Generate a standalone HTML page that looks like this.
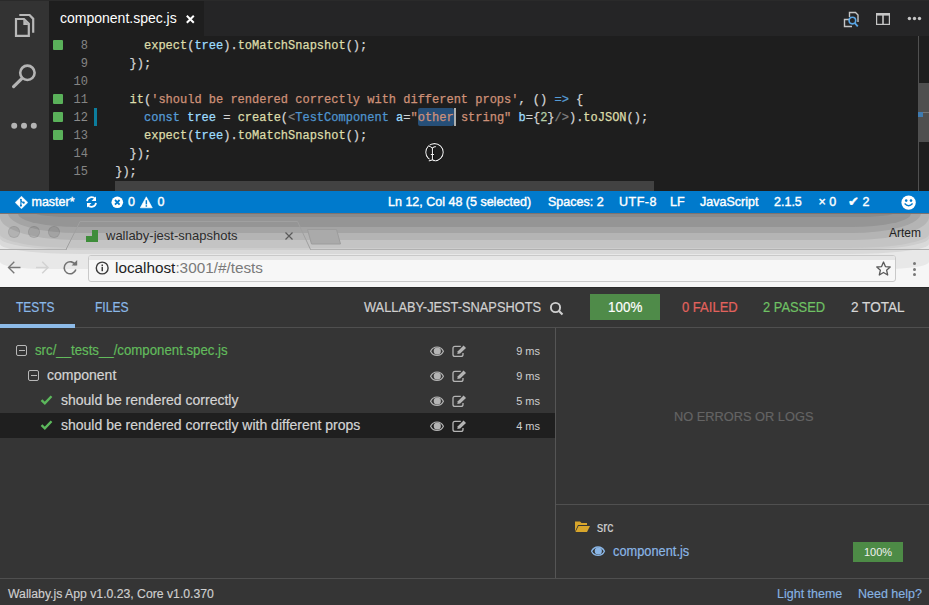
<!DOCTYPE html>
<html><head><meta charset="utf-8">
<style>
*{margin:0;padding:0;box-sizing:border-box}
html,body{width:929px;height:605px;overflow:hidden;background:#1e1e1e;font-family:"Liberation Sans",sans-serif}
.abs{position:absolute}
#vs{position:absolute;left:0;top:0;width:929px;height:191px;background:#1e1e1e}
#topline{left:0;top:0;width:929px;height:1px;background:#2a2a2a}
#act{left:0;top:0;width:49px;height:191px;background:#333333}
#tabs{left:49px;top:0;width:880px;height:36px;background:#252526}
#tab{left:49px;top:0;width:155px;height:36px;background:#1e1e1e}
.tabtxt{left:60px;top:10.75px;font-size:14px;line-height:14px;color:#ffffff;white-space:nowrap}
.code{font-family:"Liberation Mono",monospace;font-size:12px;-webkit-text-stroke:0.25px currentColor;white-space:pre;color:#d4d4d4;left:115.2px}
.ln{font-family:"Liberation Mono",monospace;font-size:12px;color:#858585;width:40px;text-align:right;left:48px}
.gm{left:53px;width:10px;height:10px;background:#5ab15a;border-radius:1px}
.f{color:#dcdcaa}.s{color:#ce9178}.k{color:#569cd6}.v{color:#9cdcfe}.g{color:#808080}.n{color:#b5cea8}.t{color:#4e94ce}
#status{left:0;top:191px;width:929px;height:22px;background:#007acc;color:#fff;font-size:12px}
#status span{position:absolute;top:5px;line-height:12px;white-space:nowrap;font-weight:normal;font-size:12.5px;-webkit-text-stroke:0.4px #fff}
#chrome{left:0;top:213px;width:929px;height:74px;background:linear-gradient(#a9a9a9,#d6d6d6)}
#toolbar{left:0;top:250px;width:929px;height:37px;background:#f6f6f6;border-top:1px solid #b9b9b9}
#app{left:0;top:287px;width:929px;height:318px;background:#353535;color:#d8d8d8}

.tl{top:13px;width:12px;height:12px;border-radius:50%;background:rgba(0,0,0,0.09);border:1px solid rgba(0,0,0,0.07)}
.ct{font-size:13px;line-height:13px;color:#2b2b2b;white-space:nowrap}
.hd{font-size:14px;line-height:14px;white-space:nowrap;-webkit-text-stroke:0.2px currentColor}
.sx{display:inline-block;transform-origin:0 50%}
.tr{font-size:14px;line-height:14px;white-space:nowrap;color:#d4d4d4;-webkit-text-stroke:0.2px currentColor}
.mb{width:11px;height:11px;border:1px solid #b8b8b8;border-radius:2px}
.mb:after{content:"";position:absolute;left:1.5px;top:4px;width:6px;height:1.2px;background:#b8b8b8}
.ms{font-size:11px;line-height:11px;text-align:right;color:#cfcfcf;white-space:nowrap}
.ft{font-size:12.5px;line-height:12.5px;white-space:nowrap;-webkit-text-stroke:0.15px currentColor}
</style></head><body>
<div id="vs">
  <div class="abs" id="act"></div>
  <div class="abs" id="tabs"></div>
  <div class="abs" id="tab"></div>
  <div class="abs" id="topline"></div>
  <svg class="abs" style="left:0;top:0" width="49" height="140">
    <path d="M16 19 H24 L28.8 23.8 V35.8 H16 Z" fill="none" stroke="#b9b9b9" stroke-width="2.2" stroke-linejoin="miter"/>
    <path d="M23.3 19.5 V25 H28.5 Z" fill="#b9b9b9"/>
    <path d="M19.3 15 H29.6 L33.2 18.6 V32.8" fill="none" stroke="#b9b9b9" stroke-width="2.2"/>
    <path d="M29.6 15 L33.2 18.6 L33.2 20 L29 15.8 Z" fill="#b9b9b9"/>
    <circle cx="27.4" cy="72.8" r="7.2" fill="none" stroke="#b4b4b4" stroke-width="2.6"/>
    <path d="M21.8 78.6 L13.6 86.6" stroke="#b4b4b4" stroke-width="3.2" stroke-linecap="round"/>
    <circle cx="14.2" cy="125.7" r="3" fill="#b4b4b4"/>
    <circle cx="24" cy="125.7" r="3" fill="#b4b4b4"/>
    <circle cx="33.8" cy="125.7" r="3" fill="#b4b4b4"/>
  </svg>
  <div class="abs tabtxt">component.spec.js</div>
  <svg class="abs" style="left:185px;top:14px" width="11" height="11"><path d="M1.8 1.8 L8.8 8.8 M8.8 1.8 L1.8 8.8" stroke="#fff" stroke-width="2"/></svg>
  <svg class="abs" style="left:840px;top:8px" width="89" height="22">
    <path d="M9.5 11.5 H4.5 V18.5 H12" fill="none" stroke="#c5c5c5" stroke-width="1.4"/>
    <path d="M9.5 9 V4.5 H15.5 L18 7 V14" fill="none" stroke="#c5c5c5" stroke-width="1.4"/>
    <circle cx="12.4" cy="12.6" r="3.3" fill="none" stroke="#5aa6e6" stroke-width="1.6"/>
    <path d="M14.8 15.1 L17.8 18.3" stroke="#5aa6e6" stroke-width="1.8"/>
    <rect x="36.6" y="5.6" width="12.8" height="10.8" fill="none" stroke="#c5c5c5" stroke-width="1.2"/>
    <rect x="36.2" y="5" width="13.6" height="2.6" fill="#c5c5c5"/>
    <rect x="42.2" y="6" width="1.6" height="10.5" fill="#c5c5c5"/>
    <circle cx="69.4" cy="10.5" r="1.7" fill="#c5c5c5"/>
    <circle cx="74.5" cy="10.5" r="1.7" fill="#c5c5c5"/>
    <circle cx="79.5" cy="10.5" r="1.7" fill="#c5c5c5"/>
  </svg>
  <!-- gutter marks -->
  <div class="abs gm" style="top:40px"></div>
  <div class="abs gm" style="top:94px"></div>
  <div class="abs gm" style="top:112px"></div>
  <div class="abs gm" style="top:130px"></div>
  <div class="abs" style="left:94px;top:108px;width:2.5px;height:18px;background:#0c7d9d"></div>
  <div class="abs ln" style="top:39px">8</div>
  <div class="abs ln" style="top:57px">9</div>
  <div class="abs ln" style="top:75px">10</div>
  <div class="abs ln" style="top:93px">11</div>
  <div class="abs ln" style="top:111px;color:#8c8c8c">12</div>
  <div class="abs ln" style="top:129px">13</div>
  <div class="abs ln" style="top:147px">14</div>
  <div class="abs ln" style="top:165px">15</div>
  <div class="abs" style="left:417.6px;top:108px;width:36.4px;height:18px;background:#264f78;border-radius:2px"></div>
  <div class="abs" style="left:454px;top:108px;width:2px;height:18px;background:#aeafad"></div>
  <div class="abs code" style="top:39px">    <span class="f">expect</span>(<span class="v">tree</span>).<span class="f">toMatchSnapshot</span>();</div>
  <div class="abs code" style="top:57px">  });</div>
  <div class="abs code" style="top:93px">  <span class="f">it</span>(<span class="s">'should be rendered correctly with different props'</span>, () <span class="k">=&gt;</span> {</div>
  <div class="abs code" style="top:111px">    <span class="k">const</span> <span class="v">tree</span> = <span class="f">create</span>(<span class="g">&lt;</span><span class="t">TestComponent</span> <span class="v">a</span>=<span class="s">"other string"</span> <span class="v">b</span>={<span class="n">2</span>}<span class="g">/&gt;</span>).<span class="f">toJSON</span>();</div>
  <div class="abs code" style="top:129px">    <span class="f">expect</span>(<span class="v">tree</span>).<span class="f">toMatchSnapshot</span>();</div>
  <div class="abs code" style="top:147px">  });</div>
  <div class="abs code" style="top:165px">});</div>
  <!-- ibeam cursor -->
  <svg class="abs" style="left:424px;top:142px" width="21" height="21">
    <circle cx="10.5" cy="10.3" r="8.7" fill="none" stroke="#000" stroke-width="2"/>
    <circle cx="10.5" cy="10.3" r="8.7" fill="none" stroke="#f0f0f0" stroke-width="1.1"/>
    <path d="M4.8 4.3 Q7 4.6 8.4 6.2 Q9.6 4.6 11.8 4.6 M8.4 6.2 V17.8 M4.8 18.9 Q7 18.6 8.4 17.8 Q9.6 18.6 11.2 18.8 M6.8 12.5 H10" fill="none" stroke="#000" stroke-width="2.2"/>
    <path d="M4.8 4.3 Q7 4.6 8.4 6.2 Q9.6 4.6 11.8 4.6 M8.4 6.2 V17.8 M4.8 18.9 Q7 18.6 8.4 17.8 Q9.6 18.6 11.2 18.8 M6.8 12.5 H10" fill="none" stroke="#f0f0f0" stroke-width="1.1"/>
  </svg>
  <!-- scrollbars -->
  <div class="abs" style="left:115px;top:181px;width:539px;height:10px;background:#424242"></div>
  <div class="abs" style="left:918px;top:36px;width:1px;height:155px;background:#505050"></div>
  <div class="abs" style="left:919px;top:83px;width:10px;height:59px;background:#4f4f4f"></div>
  <div class="abs" style="left:918px;top:112px;width:5px;height:5px;background:#3f7bb0"></div>
  <div class="abs" style="left:923px;top:112px;width:6px;height:1px;background:#777"></div>
</div>
<div class="abs" id="status">
  <svg class="abs" style="left:15px;top:5px" width="13" height="13">
    <path d="M6.5 0.2 L12.8 6.5 L6.5 12.8 L0.2 6.5 Z" fill="#fff" stroke="#fff" stroke-width="0.5" stroke-linejoin="round"/>
    <path d="M5.9 3.4 V9.6 M6 4.6 Q6.6 6.2 8.6 6.6" stroke="#007acc" stroke-width="1.1" fill="none"/>
    <circle cx="5.9" cy="3.6" r="0.9" fill="#007acc"/>
    <circle cx="5.9" cy="9.6" r="1.1" fill="#007acc"/>
    <circle cx="8.7" cy="6.7" r="1.1" fill="#007acc"/>
  </svg>
  <span style="left:31.5px">master*</span>
  <svg class="abs" style="left:85px;top:5px" width="13" height="12">
    <path d="M2 5.2 A4.6 4.6 0 0 1 10.2 3" fill="none" stroke="#fff" stroke-width="1.7"/>
    <path d="M11 0.5 V5 H6.5 Z" fill="#fff"/>
    <path d="M11 6.8 A4.6 4.6 0 0 1 2.8 9" fill="none" stroke="#fff" stroke-width="1.7"/>
    <path d="M2 11.5 V7 H6.5 Z" fill="#fff"/>
  </svg>
  <svg class="abs" style="left:111px;top:5px" width="13" height="13">
    <circle cx="6.3" cy="6.3" r="5.8" fill="#fff"/>
    <path d="M4 4 L8.6 8.6 M8.6 4 L4 8.6" stroke="#007acc" stroke-width="1.8"/>
  </svg>
  <span style="left:128px">0</span>
  <svg class="abs" style="left:140px;top:4.5px" width="13" height="13">
    <path d="M6.3 0.8 L12.3 11.8 H0.3 Z" fill="#fff" stroke="#fff" stroke-width="0.6" stroke-linejoin="round"/>
    <rect x="5.6" y="4.2" width="1.5" height="4.2" fill="#007acc"/>
    <rect x="5.6" y="9.2" width="1.5" height="1.5" fill="#007acc"/>
  </svg>
  <span style="left:157.5px">0</span>
  <span style="left:388px">Ln 12, Col 48 (5 selected)</span>
  <span style="left:548px">Spaces: 2</span>
  <span style="left:619px;letter-spacing:0.5px">UTF-8</span>
  <span style="left:670px">LF</span>
  <span style="left:700px">JavaScript</span>
  <span style="left:774px">2.1.5</span>
  <span style="left:818.5px">×&nbsp;0</span>
  <span style="left:848px">✔&nbsp;2</span>
  <svg class="abs" style="left:901px;top:4px" width="16" height="16">
    <circle cx="7.6" cy="7.6" r="7.2" fill="#fff"/>
    <circle cx="5.2" cy="5.6" r="1.3" fill="#007acc"/>
    <circle cx="10" cy="5.6" r="1.3" fill="#007acc"/>
    <path d="M3.6 8.6 Q7.6 12.8 11.6 8.6" fill="none" stroke="#007acc" stroke-width="1.4"/>
  </svg>
</div>
<div class="abs" id="chrome">
  <div class="abs" style="left:0;top:0;width:929px;height:74px;background:#f6f6f6"></div>
  <div class="abs" style="left:0;top:0;width:929px;height:56px;background:#e8e8e8;border-radius:0 0 45px 45px/0 0 7px 7px"></div>
  <div class="abs" style="left:0;top:0;width:929px;height:41px;background:#d9d9d9;border-radius:0 0 80px 80px/0 0 10px 10px"></div>
  <div class="abs" style="left:0;top:0;width:929px;height:37px;background:#cdcdcd;border-radius:0 0 80px 80px/0 0 12px 12px"></div>
  <div class="abs" style="left:0;top:0;width:929px;height:34.7px;background:#c4c4c4;border-radius:0 0 80px 80px/0 0 14px 14px"></div>
  <div class="abs" style="left:0;top:0;width:929px;height:27px;background:#b4b4b4;border-radius:0 0 75px 75px/0 0 23px 23px"></div>
  <div class="abs" style="left:8px;top:0;width:913px;height:20px;background:#a4a4a4;border-radius:0 0 70px 70px/0 0 20px 20px"></div>
  <div class="abs" style="left:18px;top:0;width:893px;height:13.5px;background:#959595;border-radius:0 0 60px 60px/0 0 13.5px 13.5px"></div>
  <div class="abs" style="left:35px;top:0;width:859px;height:4.4px;background:#8a8a8a;border-radius:0 0 40px 40px/0 0 4.4px 4.4px"></div>
  <div class="abs" style="left:0;top:0;width:929px;height:1px;background:#7d7370"></div>
  <div class="abs" style="left:0;top:36px;width:67px;height:1px;background:#b0b0b0"></div>
  <div class="abs" style="left:310px;top:36px;width:619px;height:1px;background:#b0b0b0"></div>
  <!-- traffic lights -->
  <div class="abs tl" style="left:8px"></div>
  <div class="abs tl" style="left:28px"></div>
  <div class="abs tl" style="left:48px"></div>
  <!-- tab outline -->
  <svg class="abs" style="left:0;top:0" width="929" height="40">
    <path d="M66 36.5 L80 8.5 L297.5 8.5 L310.5 36.5" fill="none" stroke="#a0a0a0" stroke-width="1"/>
    <path d="M307.5 16.5 L336.5 16.5 L340.5 31 L311.5 31 Z" fill="#aaaaaa" stroke="#9c9c9c" stroke-width="1"/>
  </svg>
  <div class="abs" style="left:86px;top:17px;width:12px;height:12px">
    <div class="abs" style="left:6px;top:0;width:6px;height:12px;background:#3e8d3a"></div>
    <div class="abs" style="left:0;top:6px;width:12px;height:6px;background:#3e8d3a"></div>
  </div>
  <div class="abs ct" style="left:106px;top:16px">wallaby-jest-snapshots</div>
  <svg class="abs" style="left:284px;top:18px" width="10" height="10"><path d="M1.5 1.5 L8.5 8.5 M8.5 1.5 L1.5 8.5" stroke="#5a5a5a" stroke-width="1.2"/></svg>
  <div class="abs ct" style="left:889px;top:14px;font-size:12px;color:#222">Artem</div>
  <!-- nav icons -->
  <svg class="abs" style="left:0;top:40px" width="90" height="34">
    <path d="M20.5 14.5 L8.5 14.5 M14.3 8.7 L8.5 14.5 L14.3 20.3" fill="none" stroke="#777777" stroke-width="1.35"/>
    <path d="M36 14.5 L48 14.5 M42.2 8.7 L48 14.5 L42.2 20.3" fill="none" stroke="#d2d2d2" stroke-width="1.5"/>
    <path d="M75.6 12.2 A6 6 0 1 0 75.9 16.6" fill="none" stroke="#727272" stroke-width="1.6"/>
    <path d="M71.6 12.6 L77.2 12.6 L77.2 7 Z" fill="#727272"/>
  </svg>
  <div class="abs" style="left:88px;top:41.5px;width:808px;height:27.5px;border:1px solid #c9c9c9;border-radius:3px;background:#f7f7f7"></div>
  <div class="abs" style="left:89px;top:42.5px;width:806px;height:4.5px;background:#e6e6e6;border-radius:2px 2px 0 0"></div>
  <svg class="abs" style="left:95px;top:48px" width="16" height="16">
    <circle cx="7.2" cy="7" r="5.9" fill="none" stroke="#3c3c3c" stroke-width="1.4"/>
    <rect x="6.5" y="5.8" width="1.5" height="4.4" fill="#3c3c3c"/>
    <rect x="6.5" y="3.5" width="1.5" height="1.5" fill="#3c3c3c"/>
  </svg>
  <div class="abs ct" style="left:115px;top:47px;font-size:15.3px;line-height:15px;color:#1f1f1f">localhost<span style="color:#7a7a7a">:3001/#/tests</span></div>
  <svg class="abs" style="left:876px;top:47.5px" width="18" height="16">
    <path d="M7.5 1 L9.4 5.6 L14.2 6 L10.6 9.2 L11.7 14 L7.5 11.5 L3.3 14 L4.4 9.2 L0.8 6 L5.6 5.6 Z" fill="none" stroke="#5a5a5a" stroke-width="1.3" stroke-linejoin="round"/>
  </svg>
  <div class="abs" style="left:913px;top:49px;width:3px;height:3px;border-radius:50%;background:#777"></div>
  <div class="abs" style="left:913px;top:54.5px;width:3px;height:3px;border-radius:50%;background:#777"></div>
  <div class="abs" style="left:913px;top:60px;width:3px;height:3px;border-radius:50%;background:#777"></div>
</div>
<div class="abs" id="app">
  <div class="abs" style="left:0;top:0;width:929px;height:1px;background:#2a2a2a"></div>
  <div class="abs hd" style="left:16px;top:12.5px;color:#8ab8e8"><span class="sx" style="transform:scaleX(0.85)">TESTS</span></div>
  <div class="abs hd" style="left:95px;top:12.5px;color:#8ab8e8"><span class="sx" style="transform:scaleX(0.86)">FILES</span></div>
  <div class="abs" style="left:0;top:40px;width:929px;height:1px;background:#4f4f4f"></div>
  <div class="abs" style="left:0;top:37px;width:75px;height:4px;background:#8dbbe8"></div>
  <div class="abs hd" style="left:364px;top:12.5px;color:#d0d0d0"><span class="sx" style="transform:scaleX(0.915)">WALLABY-JEST-SNAPSHOTS</span></div>
  <svg class="abs" style="left:548.7px;top:13.7px" width="16" height="16"><circle cx="6.5" cy="6.5" r="4.6" fill="none" stroke="#cfcfcf" stroke-width="1.9"/><path d="M10 10 L13.5 13.5" stroke="#cfcfcf" stroke-width="2.2"/></svg>
  <div class="abs" style="left:590px;top:7px;width:70px;height:26px;background:#4f8b49"></div>
  <div class="abs hd" style="left:590px;top:12.9px;width:70px;text-align:center;color:#fff;font-size:15px"><span class="sx" style="transform:scaleX(0.89);transform-origin:50% 50%">100%</span></div>
  <div class="abs hd" style="left:682px;top:12.5px;color:#e2625d"><span class="sx" style="transform:scaleX(0.93)">0 FAILED</span></div>
  <div class="abs hd" style="left:763px;top:12.5px;color:#6fc164"><span class="sx" style="transform:scaleX(0.92)">2 PASSED</span></div>
  <div class="abs hd" style="left:851px;top:12.5px;color:#d6d6d6"><span class="sx" style="transform:scaleX(0.97)">2 TOTAL</span></div>
  <div class="abs" style="left:0;top:126px;width:555px;height:25px;background:#1f1f1f"></div>
  <div class="abs mb" style="left:16px;top:58px"></div>
  <div class="abs tr" style="left:35px;top:55.6px;color:#62bb5c"><span class="sx" style="transform:scaleX(0.945)">src/__tests__/component.spec.js</span></div>
  <div class="abs mb" style="left:28px;top:83px"></div>
  <div class="abs tr" style="left:47px;top:80.6px">component</div>
  <svg class="abs" style="left:40px;top:106.5px" width="13" height="12"><path d="M1.5 6.2 L4.8 9.3 L11.5 2.2" fill="none" stroke="#5cb85c" stroke-width="2.4"/></svg>
  <div class="abs tr" style="left:61px;top:105.6px">should be rendered correctly</div>
  <svg class="abs" style="left:40px;top:131.5px" width="13" height="12"><path d="M1.5 6.2 L4.8 9.3 L11.5 2.2" fill="none" stroke="#5cb85c" stroke-width="2.4"/></svg>
  <div class="abs tr" style="left:61px;top:130.6px">should be rendered correctly with different props</div>
  <svg class="abs" style="left:429.6px;top:59.3px" width="15" height="11"><path d="M0.6 5.2 C3.2 -0.4 10.8 -0.4 13.4 5.2 C10.8 10.8 3.2 10.8 0.6 5.2 Z" fill="none" stroke="#b4b4b4" stroke-width="1.2"/><circle cx="7.3" cy="5" r="3.6" fill="#b4b4b4"/></svg>
  <svg class="abs" style="left:452px;top:58.4px" width="15" height="13"><path d="M8.8 1.4 H3 Q1 1.4 1 3.4 V9.4 Q1 11.4 3 11.4 H9 Q11 11.4 11 9.4 V8" fill="none" stroke="#b4b4b4" stroke-width="1.3"/><path d="M5.3 9 L5.8 6.3 L11.6 0.5 L14 2.9 L8.2 8.6 Z" fill="#b4b4b4"/></svg>
  <div class="abs ms" style="left:490px;top:58.6px;width:50px">9 ms</div>
  <svg class="abs" style="left:429.6px;top:84.3px" width="15" height="11"><path d="M0.6 5.2 C3.2 -0.4 10.8 -0.4 13.4 5.2 C10.8 10.8 3.2 10.8 0.6 5.2 Z" fill="none" stroke="#b4b4b4" stroke-width="1.2"/><circle cx="7.3" cy="5" r="3.6" fill="#b4b4b4"/></svg>
  <svg class="abs" style="left:452px;top:83.4px" width="15" height="13"><path d="M8.8 1.4 H3 Q1 1.4 1 3.4 V9.4 Q1 11.4 3 11.4 H9 Q11 11.4 11 9.4 V8" fill="none" stroke="#b4b4b4" stroke-width="1.3"/><path d="M5.3 9 L5.8 6.3 L11.6 0.5 L14 2.9 L8.2 8.6 Z" fill="#b4b4b4"/></svg>
  <div class="abs ms" style="left:490px;top:83.6px;width:50px">9 ms</div>
  <svg class="abs" style="left:429.6px;top:109.3px" width="15" height="11"><path d="M0.6 5.2 C3.2 -0.4 10.8 -0.4 13.4 5.2 C10.8 10.8 3.2 10.8 0.6 5.2 Z" fill="none" stroke="#b4b4b4" stroke-width="1.2"/><circle cx="7.3" cy="5" r="3.6" fill="#b4b4b4"/></svg>
  <svg class="abs" style="left:452px;top:108.4px" width="15" height="13"><path d="M8.8 1.4 H3 Q1 1.4 1 3.4 V9.4 Q1 11.4 3 11.4 H9 Q11 11.4 11 9.4 V8" fill="none" stroke="#b4b4b4" stroke-width="1.3"/><path d="M5.3 9 L5.8 6.3 L11.6 0.5 L14 2.9 L8.2 8.6 Z" fill="#b4b4b4"/></svg>
  <div class="abs ms" style="left:490px;top:108.6px;width:50px">5 ms</div>
  <svg class="abs" style="left:429.6px;top:134.3px" width="15" height="11"><path d="M0.6 5.2 C3.2 -0.4 10.8 -0.4 13.4 5.2 C10.8 10.8 3.2 10.8 0.6 5.2 Z" fill="none" stroke="#b4b4b4" stroke-width="1.2"/><circle cx="7.3" cy="5" r="3.6" fill="#b4b4b4"/></svg>
  <svg class="abs" style="left:452px;top:133.4px" width="15" height="13"><path d="M8.8 1.4 H3 Q1 1.4 1 3.4 V9.4 Q1 11.4 3 11.4 H9 Q11 11.4 11 9.4 V8" fill="none" stroke="#b4b4b4" stroke-width="1.3"/><path d="M5.3 9 L5.8 6.3 L11.6 0.5 L14 2.9 L8.2 8.6 Z" fill="#b4b4b4"/></svg>
  <div class="abs ms" style="left:490px;top:133.6px;width:50px">4 ms</div>
  <div class="abs" style="left:555px;top:41px;width:1px;height:250px;background:#555555"></div>
  <div class="abs" style="left:556px;top:217px;width:373px;height:1px;background:#505050"></div>
  <div class="abs hd" style="left:674px;top:122.5px;color:#646464;font-size:13px"><span class="sx" style="transform:scaleX(0.985)">NO ERRORS OR LOGS</span></div>
  <svg class="abs" style="left:574px;top:233px" width="17" height="13"><path d="M1 1.5 L6 1.5 L7.5 3 L13 3 L13 5 L4 5 L1 11.5 Z" fill="#d9a62b"/><path d="M4.5 6 L16 6 L13 12 L1.5 12 Z" fill="#d9a62b"/></svg>
  <div class="abs tr" style="left:597px;top:232.8px;color:#cfcfcf"><span class="sx" style="transform:scaleX(0.88)">src</span></div>
  <svg class="abs" style="left:590.5px;top:258.6px" width="15" height="11"><path d="M0.6 5.2 C3.2 -0.4 10.8 -0.4 13.4 5.2 C10.8 10.8 3.2 10.8 0.6 5.2 Z" fill="none" stroke="#8ab6e6" stroke-width="1.4"/><circle cx="7.3" cy="5" r="3.6" fill="#8ab6e6"/></svg>
  <div class="abs tr" style="left:613px;top:256.9px;color:#8ab6e6"><span class="sx" style="transform:scaleX(0.915)">component.js</span></div>
  <div class="abs" style="left:853px;top:255px;width:50px;height:20px;background:#4d8b46"></div>
  <div class="abs" style="left:853px;top:259.5px;width:50px;text-align:center;color:#f0f0f0;font-size:11px;line-height:11px">100%</div>
  <div class="abs" style="left:0;top:291px;width:929px;height:1px;background:#4f4f4f"></div>
  <div class="abs ft" style="left:8px;top:300.5px;color:#cfcfcf"><span class="sx" style="transform:scaleX(0.978)">Wallaby.js App v1.0.23, Core v1.0.370</span></div>
  <div class="abs ft" style="left:777px;top:300.7px;color:#86b2e2">Light theme</div>
  <div class="abs ft" style="left:858px;top:300.7px;color:#86b2e2">Need help?</div>
</div>
</body></html>
